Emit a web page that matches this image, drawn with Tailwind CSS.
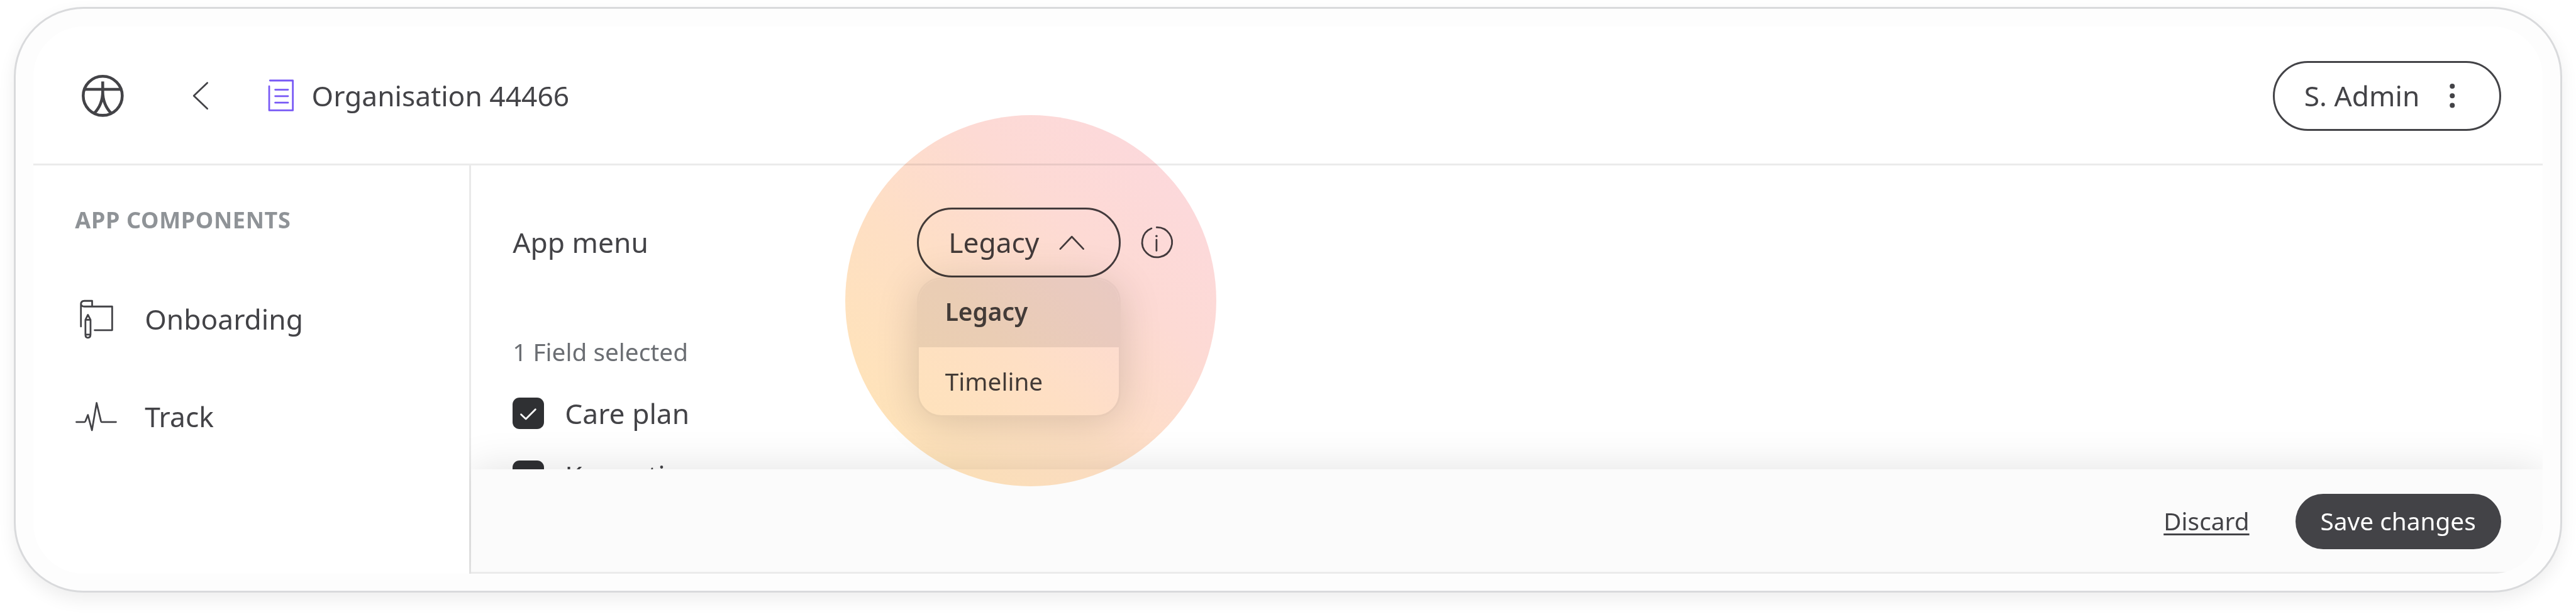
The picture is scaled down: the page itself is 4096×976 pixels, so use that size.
<!DOCTYPE html>
<html lang="en" class="text-[44.341px]">
<head>
<meta charset="utf-8">
<title>Organisation 44466</title>
<script src="https://cdn.jsdelivr.net/npm/@tailwindcss/browser@4"></script>
</head>
<body class="relative w-[4096px] h-[976px] overflow-hidden bg-white pl-2 pt-1 font-['Noto_Sans',sans-serif] text-base text-[#434347]">
  <div class="w-365.5 h-84 rounded-[2.5rem] border-[3px] border-[#d9dadc] bg-[#fdfdfd] p-2.5 shadow-[0_11px_28px_rgba(0,0,0,0.07)]">
    <div class="flex h-78.5 w-full flex-col overflow-hidden rounded-[1.8125rem] bg-white">

      <header class="flex h-20 shrink-0 items-center border-b-[3px] border-[#ebebeb] px-6 pt-[3px]">
        <svg class="size-8 shrink-0" viewBox="0 0 128 128" fill="none" stroke="#434347" stroke-width="6.6">
          <circle cx="64" cy="64" r="44.8"/>
          <path d="M64 31V72M23 49.2H105M64 54C64 76 56 92 44.5 104M64 54C64 76 72 92 83.5 104"/>
        </svg>
        <svg class="ml-7 size-6 shrink-0" viewBox="0 0 96 96" fill="none" stroke="#434347" stroke-width="4" stroke-linecap="round" stroke-linejoin="round">
          <path d="M63 18.5L32 48L63 77.5"/>
        </svg>
        <svg class="ml-5.5 size-6 shrink-0" viewBox="0 0 96 96" fill="none" stroke="#7859f5" stroke-width="4" stroke-linecap="round" stroke-linejoin="round">
          <path d="M23.5 13H76V81.5H21.7V26M35.5 34H65M35.5 48.8H65M35.5 63.8H65"/>
        </svg>
        <h1 class="ml-[16px] whitespace-nowrap">Organisation 44466</h1>
        <button class="ml-auto flex h-10 w-32.75 items-center rounded-full border-[3px] border-[#434347] pl-4.25">
          <span class="whitespace-nowrap">S. Admin</span>
          <svg class="ml-auto mr-3.75 size-6" viewBox="0 0 96 96" fill="#434347">
            <circle cx="48" cy="26" r="5.8"/><circle cx="48" cy="48" r="5.8"/><circle cx="48" cy="70" r="5.8"/>
          </svg>
        </button>
      </header>

      <div class="flex min-h-0 flex-1">
        <nav class="w-62.5 shrink-0 pl-6 pt-5.25">
          <h2 class="flex h-5 items-center whitespace-nowrap text-[0.8125rem] font-bold tracking-[0.018em] text-[#8f9397]">APP COMPONENTS</h2>
          <a class="mt-[52.5px] flex h-14 items-center gap-2">
            <svg class="size-8 shrink-0" viewBox="0 0 128 128" fill="none" stroke="#434347" stroke-width="4" stroke-linecap="round" stroke-linejoin="round">
              <path d="M14 80.7V30Q14 22 22 22H39.7V35M14 28Q14 35 22 35H85.7V89.3H45.5"/>
              <path d="M30 54L24.3 65.5V99.5Q24.3 106.5 30 106.5T36 99.5V65.5ZM24.3 65.5H36M24.3 99.5H36"/>
            </svg>
            <span>Onboarding</span>
          </a>
          <a class="flex h-14 items-center gap-2">
            <svg class="size-8 shrink-0" viewBox="0 0 128 128" fill="none" stroke="#434347" stroke-width="4" stroke-linecap="round" stroke-linejoin="round">
              <path d="M3.5 76.3H22Q23.5 76.3 24.5 74L30 60L39.3 95L50 32.5L60 74.5Q60.6 76.3 62 76.3H94.5"/>
            </svg>
            <span>Track</span>
          </a>
        </nav>

        <div class="min-w-0 flex-1 overflow-hidden">
          <main class="relative h-full border-l-[3px] border-[#e9e9e9] pl-6 pt-6">
            <div class="flex h-10 items-center">
              <span class="w-58 shrink-0">App menu</span>
              <div class="relative h-10 w-29.25">
                <button class="flex h-full w-full items-center rounded-full border-[3px] border-[#434347] pl-4.25">
                  <span>Legacy</span>
                  <svg class="ml-auto mr-3.75 size-6" viewBox="0 0 96 96" fill="none" stroke="#434347" stroke-width="4" stroke-linecap="round" stroke-linejoin="round">
                    <path d="M21.5 63L48 35L74.5 63"/>
                  </svg>
                </button>
                <ul class="absolute left-0 top-full w-full overflow-hidden rounded-[0.875rem] border-[3px] border-[#ebebeb] bg-white text-sm shadow-[0_8px_66px_rgba(0,0,0,0.15)]">
                  <li class="flex h-9.75 items-center bg-[#ebebeb] pb-[4px] pl-3.75 font-semibold">Legacy</li>
                  <li class="flex h-9.75 items-center pl-3.75 pt-[2px]">Timeline</li>
                </ul>
              </div>
              <svg class="ml-[24px] size-6" viewBox="0 0 96 96" fill="none" stroke="#434347" stroke-width="4" stroke-linecap="round">
                <path d="M48 13.5A34.3 34.3 0 1 1 36 16M47.5 42V67"/>
                <circle cx="47.5" cy="33.5" r="2.6" fill="#434347" stroke="none"/>
              </svg>
            </div>

            <p class="mt-8 flex h-5.25 items-center pt-[2px] text-sm text-[#6b6e73]">1 Field selected</p>
            <div class="mt-4 flex flex-col gap-4.5">
              <label class="flex h-4.5 items-center gap-3">
                <svg class="size-4.5 shrink-0 rounded bg-[#2f3033]" viewBox="0 0 72 72" fill="none" stroke="#fff" stroke-width="4" stroke-linecap="round" stroke-linejoin="round"><path d="M19.5 38.5L30.5 49L52.5 27"/></svg>
                <span>Care plan</span>
              </label>
              <label class="flex h-4.5 items-center gap-3">
                <svg class="size-4.5 shrink-0 rounded bg-[#2f3033]" viewBox="0 0 72 72" fill="none" stroke="#fff" stroke-width="4" stroke-linecap="round" stroke-linejoin="round"><path d="M19.5 38.5L30.5 49L52.5 27"/></svg>
                <span>Key actions</span>
              </label>
            </div>

            <footer class="absolute bottom-0 left-0 right-0 flex h-15 items-center justify-end gap-[73px] border-b-[3px] border-[#ebebeb] bg-[#fbfbfb] pr-6 pt-[3px] text-sm shadow-[0_0_66px_rgba(0,0,0,0.12)]">
              <a class="underline decoration-[3px] underline-offset-[5px]">Discard</a>
              <button class="h-8 w-29.5 whitespace-nowrap rounded-full bg-[#434347] text-white">Save changes</button>
            </footer>
          </main>
        </div>
      </div>
    </div>
  </div>

  <!-- Highlight spot over the open menu -->
  <div class="pointer-events-none absolute left-[1344px] top-[183px] size-[590px] rounded-full bg-[linear-gradient(45deg,#ffe5b4,#fedfc4_40%,#fddad4_65%,#fcd8e0)] mix-blend-multiply"></div>
</body>
</html>
